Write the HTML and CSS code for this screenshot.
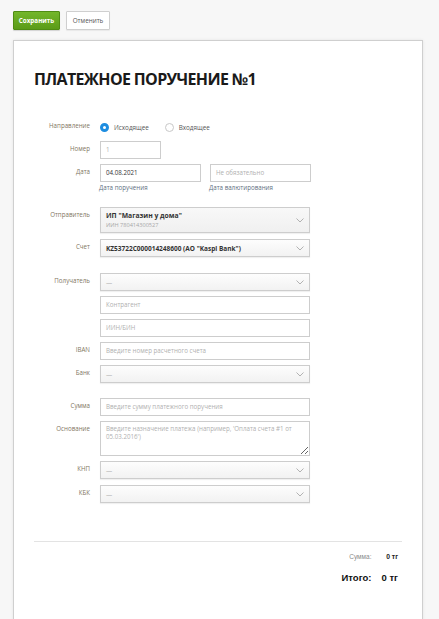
FILE: index.html
```html
<!DOCTYPE html>
<html lang="ru">
<head>
<meta charset="utf-8">
<title>Платежное поручение</title>
<link rel="stylesheet" href="styles.css">
</head>
<body>
<div class="toolbar">
  <button class="btn btn-save">Сохранить</button>
  <button class="btn btn-cancel">Отменить</button>
</div>
<div class="card">
  <h1 class="title">ПЛАТЕЖНОЕ ПОРУЧЕНИЕ №1</h1>
  <div class="form">
    <div class="row row-radio">
      <div class="label">Направление</div>
      <div class="field radios">
        <span class="radio"><span class="dot on"></span>Исходящее</span>
        <span class="radio"><span class="dot"></span>Входящее</span>
      </div>
    </div>
    <div class="row">
      <div class="label">Номер</div>
      <div class="field"><div class="input w60 ph">1</div></div>
    </div>
    <div class="row">
      <div class="label">Дата</div>
      <div class="field dates">
        <div class="datecol">
          <div class="input w100">04.08.2021</div>
          <div class="caption">Дата поручения</div>
        </div>
        <div class="datecol">
          <div class="input w100 ph">Не обязательно</div>
          <div class="caption">Дата валютирования</div>
        </div>
      </div>
    </div>

    <div class="row group-a">
      <div class="label">Отправитель</div>
      <div class="field">
        <div class="select tall">
          <div class="sel-text">
            <div class="strong">ИП "Магазин у дома"</div>
            <div class="sub">ИИН 780414300527</div>
          </div>
          <svg class="chev" width="8" height="5" viewBox="0 0 8 5"><polyline points="0.5,0.5 4,4 7.5,0.5" fill="none" stroke="#a0a0a0" stroke-width="0.8"/></svg>
        </div>
      </div>
    </div>
    <div class="row r2">
      <div class="label">Счет</div>
      <div class="field">
        <div class="select"><span class="strong acc">KZ53722C000014248600 (АО "Kaspi Bank")</span><svg class="chev" width="8" height="5" viewBox="0 0 8 5"><polyline points="0.5,0.5 4,4 7.5,0.5" fill="none" stroke="#a0a0a0" stroke-width="0.8"/></svg></div>
      </div>
    </div>

    <div class="row group-b">
      <div class="label">Получатель</div>
      <div class="field"><div class="select"><span class="ph">—</span><svg class="chev" width="8" height="5" viewBox="0 0 8 5"><polyline points="0.5,0.5 4,4 7.5,0.5" fill="none" stroke="#a0a0a0" stroke-width="0.8"/></svg></div></div>
    </div>
    <div class="row">
      <div class="label"></div>
      <div class="field"><div class="input ph">Контрагент</div></div>
    </div>
    <div class="row">
      <div class="label"></div>
      <div class="field"><div class="input ph">ИИН/БИН</div></div>
    </div>
    <div class="row">
      <div class="label">IBAN</div>
      <div class="field"><div class="input ph">Введите номер расчетного счета</div></div>
    </div>
    <div class="row">
      <div class="label">Банк</div>
      <div class="field"><div class="select"><span class="ph">—</span><svg class="chev" width="8" height="5" viewBox="0 0 8 5"><polyline points="0.5,0.5 4,4 7.5,0.5" fill="none" stroke="#a0a0a0" stroke-width="0.8"/></svg></div></div>
    </div>

    <div class="row group-s">
      <div class="label">Сумма</div>
      <div class="field"><div class="input ph">Введите сумму платежного поручения</div></div>
    </div>
    <div class="row">
      <div class="label">Основание</div>
      <div class="field"><textarea class="textarea" placeholder="Введите назначение платежа (например, 'Оплата счета #1 от 05.03.2016')"></textarea></div>
    </div>
    <div class="row">
      <div class="label">КНП</div>
      <div class="field"><div class="select"><span class="ph">—</span><svg class="chev" width="8" height="5" viewBox="0 0 8 5"><polyline points="0.5,0.5 4,4 7.5,0.5" fill="none" stroke="#a0a0a0" stroke-width="0.8"/></svg></div></div>
    </div>
    <div class="row r1">
      <div class="label">КБК</div>
      <div class="field"><div class="select"><span class="ph">—</span><svg class="chev" width="8" height="5" viewBox="0 0 8 5"><polyline points="0.5,0.5 4,4 7.5,0.5" fill="none" stroke="#a0a0a0" stroke-width="0.8"/></svg></div></div>
    </div>
  </div>
  <hr class="sep">
  <div class="totals">
    <div class="t-label">Сумма:</div><div class="t-val">0 тг</div>
    <div class="t-label big">Итого:</div><div class="t-val big">0 тг</div>
  </div>
</div>
</body>
</html>
```

FILE: styles.css
```css
html, body {
  margin: 0;
  padding: 0;
  background: #f7f7f7;
  font-family: "Open Sans", "DejaVu Sans", sans-serif;
  color: #333;
  height: 619px;
  overflow: hidden;
}
.toolbar {
  display: flex;
  gap: 6px;
  padding: 11px 0 0 13px;
  height: 19px;
}
.btn {
  height: 19px;
  padding: 0;
  font-family: "Open Sans", sans-serif;
  font-size: 6.3px;
  border-radius: 1px;
  cursor: pointer;
}
.btn-save {
  width: 47px;
  background: linear-gradient(#73b62a, #5b9c19);
  border: 1px solid #4f8c14;
  color: #fff;
  font-weight: 700;
  box-shadow: 0 1px 1px rgba(0,0,0,.15);
}
.btn-cancel {
  width: 44px;
  background: #fff;
  border: 1px solid #cfcfcf;
  color: #555;
  box-shadow: 0 1px 1px rgba(0,0,0,.06);
}
.card {
  margin: 10px 0 0 13px;
  width: 410px;
  box-sizing: border-box;
  height: 600px;
  background: #fff;
  border: 1px solid #cfcfcf;
  box-shadow: 0 0 3px rgba(0,0,0,.08);
  padding: 27px 20px 0 20px;
}
.title {
  margin: 0;
  font-size: 16px;
  line-height: 22px;
  font-weight: 700;
  color: #1a1a1a;
  letter-spacing: -0.65px;
}
.form {
  display: flex;
  flex-direction: column;
  gap: 5px;
  margin-top: 28px;
}
.row {
  display: grid;
  grid-template-columns: 56px 210px;
  column-gap: 10px;
}
.row.group-a { margin-top: 9px; }
.row.group-b { margin-top: 11px; }
.row.group-s { margin-top: 10px; }
.row.r1 { margin-top: 1px; }
.row.r2 { margin-top: 1px; }
.label {
  text-align: right;
  font-size: 6.2px;
  line-height: 12px;
  padding-top: 2px;
  color: #82765f;
  white-space: nowrap;
}
.field { min-width: 0; }
.radios {
  display: flex;
  height: 18px;
  align-items: center;
  gap: 16px;
  font-size: 6.3px;
  color: #555;
}
.radio {
  display: flex;
  align-items: center;
  gap: 5px;
}
.dot {
  width: 9px;
  height: 9px;
  box-sizing: border-box;
  border-radius: 50%;
  border: 1px solid #c8c8c8;
  background: #fff;
}
.dot.on {
  border: 3px solid #1e8de0;
}
.input {
  box-sizing: border-box;
  height: 18px;
  border: 1px solid #cdcdcd;
  background: #fff;
  font-size: 6.2px;
  line-height: 16px;
  padding: 0 5px;
  color: #333;
  white-space: nowrap;
  overflow: hidden;
}
.w60 { width: 61px; }
.w100 { width: 101px; }
.ph { color: #b0b0b0; }
.input.ph { color: #b0b0b0; }
.dates {
  display: flex;
  gap: 9px;
}
.datecol { display: flex; flex-direction: column; }
.caption {
  font-size: 6.2px;
  line-height: 10px;
  margin-top: 1px;
  color: #5d6e80;
  margin-left: -1px;
}
.select {
  box-sizing: border-box;
  height: 18px;
  border: 1px solid #cdcdcd;
  background: linear-gradient(#fdfdfd, #f2f2f2);
  box-shadow: 0 1px 1px rgba(0,0,0,.06);
  display: flex;
  align-items: center;
  justify-content: space-between;
  padding: 0 5px 0 5px;
  font-size: 6.2px;
  color: #333;
}
.select.tall {
  height: 26px;
  background: linear-gradient(#f8f8f8, #f0f0f0);
}
.sel-text { display: flex; flex-direction: column; }
.strong { font-weight: 700; color: #333; font-size: 6.8px; }
.strong.acc { font-size: 6.5px; }
.sub {
  font-size: 5.6px;
  line-height: 8px;
  color: #a8a8a8;
}
.sel-text .strong { line-height: 10px; margin-top: -1px; }
.chev { display: block; }
.textarea {
  display: block;
  box-sizing: border-box;
  width: 210px;
  height: 35px;
  margin: 0;
  border: 1px solid #cdcdcd;
  border-radius: 0;
  padding: 3px 5px;
  font-family: "Open Sans", sans-serif;
  font-size: 6.2px;
  line-height: 8px;
  color: #333;
  outline: none;
  resize: vertical;
}
.textarea::placeholder { color: #b0b0b0; }
.sep {
  margin: 38px 0 0 0;
  border: 0;
  border-top: 1px solid #e3e3e3;
  width: 368px;
}
.totals {
  display: grid;
  grid-template-columns: 1fr auto;
  column-gap: 13px;
  row-gap: 12px;
  margin-top: 11px;
  padding-right: 4px;
  align-items: baseline;
  font-family: "Liberation Sans", Arial, sans-serif;
}
.t-label {
  text-align: right;
  font-size: 6.5px;
  color: #8a8a8a;
}
.t-val {
  text-align: right;
  font-size: 6.8px;
  font-weight: 700;
  color: #222;
}
.t-label.big, .t-val.big {
  font-size: 9.5px;
  font-weight: 700;
  color: #111;
}
.t-val.big { margin-left: -3px; }
```
